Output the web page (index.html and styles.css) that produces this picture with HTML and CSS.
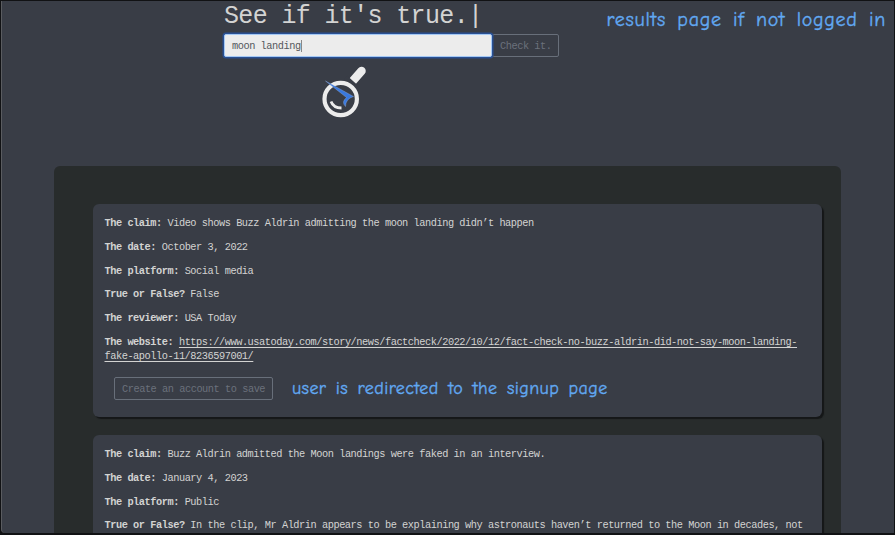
FILE: index.html
```html
<!DOCTYPE html>
<html lang="en">
<head>
<meta charset="utf-8">
<title>See if it's true.</title>
<link rel="stylesheet" href="styles.css">
</head>
<body>
<main class="page">
  <span class="note note-results">results page if not logged in</span>
  <header class="search">
    <h1>See if it's true.<span class="cursor">|</span></h1>
    <form class="search-form">
      <div class="query">moon landing<span class="caret"></span></div>
      <button type="button" class="btn check">Check it.</button>
    </form>
    <svg class="logo" viewBox="0 0 48 54" width="48" height="54">
      <path d="M30 18 40.500 6" stroke="#ececec" stroke-width="8.500" stroke-linecap="round"/>
      <path d="M24.500 12.500 34.500 21.500" stroke="#393d46" stroke-width="5"/>
      <circle cx="19.700" cy="34" r="16.200" fill="none" stroke="#ececec" stroke-width="4.200"/>
      <path d="M10 36.500Q12.500 43 20.500 43" fill="none" stroke="#ececec" stroke-width="2.800"/>
      <path d="M4.500 16 32.500 31.500Q24.500 34 24.500 41.500Q20 37 25.500 32.500Z" fill="#3979df" stroke="#8fabdc" stroke-width=".4"/>
    </svg>
  </header>
  <section class="results">
    <article class="card">
      <p><b>The claim:</b> Video shows Buzz Aldrin admitting the moon landing didn’t happen</p>
      <p><b>The date:</b> October 3, 2022</p>
      <p><b>The platform:</b> Social media</p>
      <p><b>True or False?</b> False</p>
      <p><b>The reviewer:</b> USA Today</p>
      <p><b>The website:</b> <a>https://www.usatoday.com/story/news/factcheck/2022/10/12/fact-check-no-buzz-aldrin-did-not-say-moon-landing-<br>fake-apollo-11/8236597001/</a></p>
      <div class="actions">
        <button type="button" class="btn save">Create an account to save</button>
        <span class="note note-save">user is redirected to the signup page</span>
      </div>
    </article>
    <article class="card">
      <p><b>The claim:</b> Buzz Aldrin admitted the Moon landings were faked in an interview.</p>
      <p><b>The date:</b> January 4, 2023</p>
      <p><b>The platform:</b> Public</p>
      <p><b>True or False?</b> In the clip, Mr Aldrin appears to be explaining why astronauts haven’t returned to the Moon in decades, not</p>
    </article>
  </section>
</main>
</body>
</html>
```
FILE: styles.css
```css
* { box-sizing: border-box; }
html { background: #111214; }
body {
  margin: 0;
  height: 535px;
  padding: 1px 1px 2px;
  overflow: hidden;
  background: #111214;
  color: #d3d3d2;
  font: 10.3px/14.3px "Liberation Mono", monospace;
  letter-spacing: -.456px;
}
.page {
  position: relative;
  height: 532px;
  overflow: hidden;
  background: #393d46;
  border-left: 1px solid #5a5c60;
  border-bottom-left-radius: 4px;
}
.search {
  height: 165px;
  padding-left: 222px;
}
h1 {
  margin: 0;
  height: 33px;
  font-size: 25px;
  line-height: 31px;
  font-weight: 400;
  letter-spacing: -.65px;
}
.search-form { display: flex; height: 23px; }
.query {
  display: flex;
  align-items: center;
  width: 268px;
  padding: 1px 0 0 7px;
  background: #ececec;
  border: 1px solid #a4c8f4;
  border-radius: 2px;
  box-shadow: 0 0 0 1.5px #294f91;
  color: #55585d;
  z-index: 1;
}
.caret { width: 1px; height: 12px; background: #888; }
.btn {
  height: 23px;
  padding: 2px 7px 0;
  border: 1px solid #686f7a;
  border-radius: 2px;
  background: transparent;
  color: #6b717c;
  font: inherit;
  letter-spacing: inherit;
  text-align: left;
  white-space: nowrap;
}
.check { width: 67px; }
.logo { display: block; margin: 8px 0 0 97px; }
.note {
  color: #61a9f3;
  font-family: "Comic Neue", "Comic Sans MS", cursive;
  font-weight: 400;
  -webkit-text-stroke: .35px #61a9f3;
  white-space: nowrap;
}
.note-results {
  position: absolute;
  top: 5px;
  right: 8px;
  font-size: 20px;
  line-height: 28px;
  letter-spacing: .7px;
  word-spacing: 4px;
}
.results {
  width: 787px;
  height: 390px;
  margin-left: 52px;
  padding: 38px 19px 0 39px;
  background: #282c2c;
  border-radius: 6px;
}
.card {
  height: 213px;
  margin-bottom: 18px;
  padding: 12px 11.5px;
  background: #393d46;
  border-radius: 6px;
  box-shadow: 2px 2px 1px #151718;
}
.card p { margin: 0 0 9.5px; white-space: nowrap; }
.card a { text-decoration: underline; text-underline-offset: 2px; }
.actions { display: flex; align-items: center; padding: 4px 0 0 9.5px; }
.save { width: 159px; }
.note-save {
  margin-left: 19px;
  font-size: 18px;
  line-height: 23px;
  letter-spacing: .4px;
  word-spacing: 3px;
}
```
